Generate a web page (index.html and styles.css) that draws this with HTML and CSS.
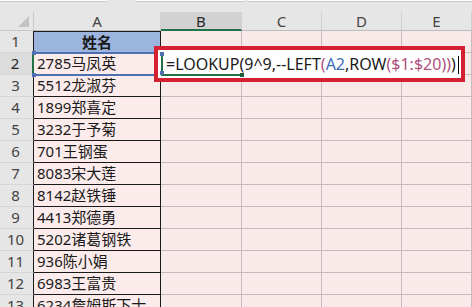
FILE: index.html
```html
<!DOCTYPE html>
<html lang="zh-CN">
<head>
<meta charset="utf-8">
<title>LOOKUP</title>
<link rel="stylesheet" href="styles.css">
</head>
<body>
<div class="app">
  <div class="topbar">
    <div class="namebox"></div>
    <div class="fxbox"></div>
    <div class="fbar"></div>
  </div>
  <div class="sheet">
    <div class="corner"><span class="tri"></span></div>
    <div class="colhead">A</div>
    <div class="colhead sel">B</div>
    <div class="colhead">C</div>
    <div class="colhead">D</div>
    <div class="colhead">E</div>

    <div class="rowhead">1</div><div class="a title">姓名</div><div class="g"></div><div class="g"></div><div class="g"></div><div class="g"></div>
    <div class="rowhead sel">2</div><div class="a">2785马凤英</div><div class="g"></div><div class="g"></div><div class="g"></div><div class="g"></div>
    <div class="rowhead">3</div><div class="a">5512龙淑芬</div><div class="g"></div><div class="g"></div><div class="g"></div><div class="g"></div>
    <div class="rowhead">4</div><div class="a">1899郑喜定</div><div class="g"></div><div class="g"></div><div class="g"></div><div class="g"></div>
    <div class="rowhead">5</div><div class="a">3232于予菊</div><div class="g"></div><div class="g"></div><div class="g"></div><div class="g"></div>
    <div class="rowhead">6</div><div class="a">701王钢蛋</div><div class="g"></div><div class="g"></div><div class="g"></div><div class="g"></div>
    <div class="rowhead">7</div><div class="a">8083宋大莲</div><div class="g"></div><div class="g"></div><div class="g"></div><div class="g"></div>
    <div class="rowhead">8</div><div class="a">8142赵铁锤</div><div class="g"></div><div class="g"></div><div class="g"></div><div class="g"></div>
    <div class="rowhead">9</div><div class="a">4413郑德勇</div><div class="g"></div><div class="g"></div><div class="g"></div><div class="g"></div>
    <div class="rowhead">10</div><div class="a">5202诸葛钢铁</div><div class="g"></div><div class="g"></div><div class="g"></div><div class="g"></div>
    <div class="rowhead">11</div><div class="a">936陈小娟</div><div class="g"></div><div class="g"></div><div class="g"></div><div class="g"></div>
    <div class="rowhead">12</div><div class="a">6983王富贵</div><div class="g"></div><div class="g"></div><div class="g"></div><div class="g"></div>
    <div class="rowhead">13</div><div class="a">6234詹姆斯下士</div><div class="g"></div><div class="g"></div><div class="g"></div><div class="g"></div>
  </div>

  <div class="refbox">
    <span class="h tl"></span><span class="h tr"></span><span class="h bl"></span><span class="h br"></span>
  </div>

  <div class="editor">
    <span class="selleft"></span>
    <span class="selbottom"></span>
    <span class="fill"></span>
    <span class="rh rh-top"></span>
    <span class="rh rh-bot"></span>
    <div class="formula">=LOOKUP(9^9,--LEFT<span class="p">(</span><span class="ref1">A2</span>,ROW<span class="p">(</span><span class="ref2">$1:$20</span><span class="p">)</span><span class="p">)</span>)<span class="caret"></span></div>
  </div>
</div>
</body>
</html>
```

FILE: styles.css
```css
* { box-sizing: border-box; }
html, body {
  margin: 0;
  padding: 0;
  width: 472px;
  height: 307px;
  overflow: hidden;
  background: #f9eaea;
}
.app {
  position: relative;
  width: 472px;
  height: 307px;
  overflow: hidden;
  font-family: "Noto Sans", "Noto Sans CJK SC", sans-serif;
  color: #222;
}
.topbar {
  height: 12px;
  background: #e6e6e6;
  display: flex;
  align-items: flex-start;
}
.namebox {
  width: 107px;
  height: 2px;
  background: #fff;
  border-bottom: 1px solid #c8c8c8;
}
.fxbox {
  width: 109px;
  height: 2px;
  margin-left: 29px;
  background: #fff;
  border-bottom: 1px solid #c8c8c8;
}
.fbar {
  flex: 1;
  height: 2px;
  margin-left: 3px;
  background: #fff;
  border-bottom: 1px solid #c8c8c8;
}
.sheet {
  display: grid;
  grid-template-columns: 34px 127px 81px 80px 80px 70px;
  grid-template-rows: 19px repeat(13, 22px);
}
.corner {
  background: #e6e6e6;
  border-right: 1px solid #c9c9c9;
  border-bottom: 1px solid #c9c9c9;
  position: relative;
}
.tri {
  position: absolute;
  right: 4px;
  bottom: 3px;
  width: 0;
  height: 0;
  border-left: 11px solid transparent;
  border-bottom: 11px solid #c4c4c4;
}
.colhead {
  background: #e6e6e6;
  border-right: 1px solid #cfcfcf;
  border-bottom: 1px solid #bdbdbd;
  color: #444;
  font-size: 15px;
  line-height: 18px;
  text-align: center;
}
.colhead.sel {
  background: #d2d2d2;
  border-bottom: 2px solid #217346;
  color: #262626;
}
.rowhead {
  background: #e6e6e6;
  border-right: 1px solid #1a1a1a;
  border-bottom: 1px solid #d6d6d6;
  color: #444;
  font-size: 15px;
  line-height: 21px;
  text-align: center;
  padding-right: 2px;
}
.rowhead.sel {
  background: #dcdcdc;
  border-right: 2px solid #217346;
  color: #262626;
}
.a {
  background: #fbebeb;
  border-right: 1px solid #1a1a1a;
  border-bottom: 1px solid #1a1a1a;
  font-size: 15px;
  line-height: 21px;
  padding-left: 3px;
  white-space: nowrap;
  overflow: hidden;
  color: #1a1a1a;
}
.a.title {
  background: #9cb5de;
  font-weight: bold;
  text-align: center;
  padding-left: 0;
  border-top: 1px solid #1a1a1a;
  line-height: 20px;
}
.g {
  background: #f9eaea;
  border-right: 1px solid #c7b9bc;
  border-bottom: 1px solid #c7b9bc;
}
.refbox {
  position: absolute;
  left: 34px;
  top: 52px;
  width: 128px;
  height: 24px;
  border-top: 2px solid #4f6fb3;
  border-bottom: 2px solid #4f6fb3;
}
.h {
  position: absolute;
  width: 4px;
  height: 4px;
  background: #4f6fb3;
}
.refbox .tl { left: -2px; top: -3px; }
.refbox .bl { left: -2px; bottom: -3px; }
.refbox .tr { right: -2px; top: -3px; }
.refbox .br { right: -2px; bottom: -3px; }
.editor {
  position: absolute;
  left: 154px;
  top: 46px;
  width: 311px;
  height: 36px;
  border: 4px solid #d42131;
  background: #fff;
}
.selleft {
  position: absolute;
  left: 3px;
  top: 4px;
  width: 2px;
  height: 18px;
  background: #217346;
}
.selbottom {
  position: absolute;
  left: 3px;
  top: 24px;
  width: 83px;
  height: 2px;
  background: #217346;
}
.fill {
  position: absolute;
  left: 82px;
  top: 23px;
  width: 4px;
  height: 4px;
  background: #1d5f3a;
}
.rh {
  position: absolute;
  left: 2px;
  width: 4px;
  height: 4px;
  background: #4f6fb3;
}
.rh-top { top: 2px; }
.rh-bot { top: 21px; }
.formula {
  position: relative;
  padding-left: 8px;
  padding-top: 4px;
  font-size: 16px;
  line-height: 20px;
  color: #1a1a1a;
  white-space: nowrap;
}
.p { color: #b0507e; }
.ref1 { color: #3f6db4; }
.ref2 { color: #b0507e; }
.caret {
  display: inline-block;
  width: 1px;
  height: 18px;
  background: #000;
  vertical-align: -4px;
  margin-left: 2px;
}
```
